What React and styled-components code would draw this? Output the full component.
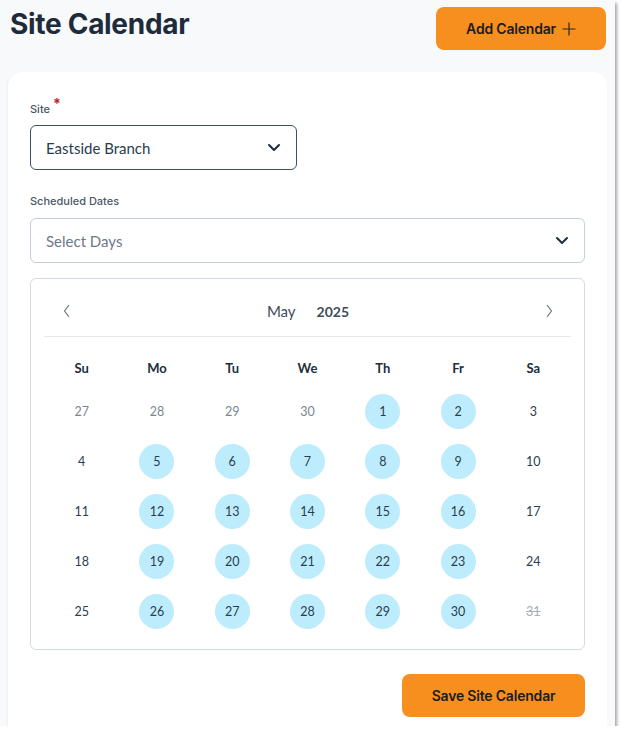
import React from "react";
import styled, { createGlobalStyle } from "styled-components";

const GlobalStyle = createGlobalStyle`
  html, body {
    margin: 0;
    padding: 0;
    background: #ffffff;
  }
  * {
    box-sizing: border-box;
  }
`;

const Frame = styled.div`
  width: 615px;
  height: 726px;
  background: #f7f9fb;
  box-shadow: 2px 3px 3px rgba(0, 0, 0, 0.35);
  overflow: hidden;
  font-family: "Lato", "Noto Sans", sans-serif;
`;

const Header = styled.header`
  display: flex;
  justify-content: space-between;
  align-items: flex-start;
  height: 72px;
  padding: 7px 9px 0 10px;
`;

const Title = styled.h1`
  margin: 0;
  margin-top: -3px;
  font-family: "Inter", sans-serif;
  font-size: 28px;
  font-weight: 700;
  letter-spacing: -0.3px;
  color: #1d2b3a;
  line-height: 40px;
`;

const OrangeButton = styled.button`
  display: flex;
  align-items: center;
  justify-content: center;
  gap: 6px;
  width: ${({ w }) => w}px;
  height: 43px;
  border: none;
  border-radius: 8px;
  background: #f78f1e;
  color: #1c1c1c;
  font-family: "Inter", sans-serif;
  font-size: 14px;
  font-weight: 600;
  letter-spacing: -0.2px;
  cursor: pointer;
  padding: 0;
`;

const Card = styled.main`
  margin-left: 8px;
  width: 599px;
  height: 660px;
  background: #ffffff;
  border-radius: 14px 14px 0 0;
  box-shadow: -1px 0 2px rgba(0, 0, 0, 0.04);
  padding: 29px 22px 0 22px;
  display: flex;
  flex-direction: column;
`;

const Label = styled.label`
  display: block;
  height: 14px;
  font-family: "Inter", sans-serif;
  font-size: 11px;
  font-weight: 500;
  color: #4c5868;
  line-height: 14px;
  margin-top: ${({ mt }) => mt || 0}px;
  margin-bottom: 10px;
`;

const Required = styled.span`
  color: #c0272d;
  font-size: 14px;
  font-weight: 700;
  margin-left: 3px;
  position: relative;
  top: -4px;
`;

const Select = styled.div`
  display: flex;
  align-items: center;
  justify-content: space-between;
  width: ${({ w }) => (w ? `${w}px` : "100%")};
  height: 45px;
  border: 1px solid ${({ active }) => (active ? "#3e5064" : "#c3cfdb")};
  border-radius: 6px;
  padding: 0 15px 0 15px;
  font-size: 15px;
  color: ${({ active }) => (active ? "#2b3b4e" : "#6d7987")};
`;

const Chevron = () => (
  <svg width="14" height="9" viewBox="0 0 14 9" fill="none">
    <path d="M2 2l5 5 5-5" stroke="#1e2d3f" strokeWidth="2" strokeLinecap="round" strokeLinejoin="round" />
  </svg>
);

const Plus = () => (
  <svg width="14" height="14" viewBox="0 0 14 14" fill="none">
    <path d="M7 0.5v13M0.5 7h13" stroke="#2a2a2a" strokeWidth="1.2" />
  </svg>
);

const Calendar = styled.section`
  margin-top: 15px;
  height: 372px;
  border: 1px solid #d3dbe3;
  border-radius: 6px;
  padding: 0 13px;
`;

const CalHead = styled.div`
  display: flex;
  align-items: center;
  justify-content: space-between;
  height: 58px;
  padding: 6px 16px 0 17px;
  border-bottom: 1px solid #e5e9ee;
`;

const NavArrow = styled.span`
  display: flex;
  width: 10px;
  justify-content: center;
`;

const MonthYear = styled.div`
  display: flex;
  gap: 21px;
  align-items: baseline;
  color: #3f4c5c;
`;

const Month = styled.span`
  font-size: 15px;
`;

const Year = styled.span`
  font-size: 14px;
  font-weight: 700;
`;

const Grid = styled.div`
  display: grid;
  grid-template-columns: repeat(7, 1fr);
  grid-template-rows: 36px repeat(5, 50px);
  margin-top: 13px;
`;

const WeekDay = styled.div`
  display: flex;
  align-items: center;
  justify-content: center;
  font-size: 13px;
  font-weight: 700;
  color: #202e3e;
`;

const Cell = styled.div`
  display: flex;
  align-items: center;
  justify-content: center;
`;

const Day = styled.span`
  display: flex;
  align-items: center;
  justify-content: center;
  width: 35px;
  height: 35px;
  border-radius: 50%;
  font-size: 12.5px;
  background: ${({ selected }) => (selected ? "#bdecfd" : "transparent")};
  color: ${({ muted, disabled }) => (disabled ? "#a6afb9" : muted ? "#7b8692" : "#2c3c4f")};
  text-decoration: ${({ disabled }) => (disabled ? "line-through" : "none")};
`;

const Footer = styled.div`
  display: flex;
  justify-content: flex-end;
  margin-top: 24px;
`;

const weekDays = ["Su", "Mo", "Tu", "We", "Th", "Fr", "Sa"];

const buildDays = () => {
  const cells = [27, 28, 29, 30].map((d) => ({ d, muted: true }));
  for (let d = 1; d <= 31; d++) {
    const col = (d + 3) % 7;
    cells.push({
      d,
      selected: d !== 31 && col !== 0 && col !== 6,
      disabled: d === 31,
    });
  }
  return cells;
};

const Left = () => (
  <svg width="7" height="14" viewBox="0 0 7 14" fill="none">
    <path d="M6 1L1.5 7 6 13" stroke="#6b7785" strokeWidth="1.2" />
  </svg>
);

const Right = () => (
  <svg width="7" height="14" viewBox="0 0 7 14" fill="none">
    <path d="M1 1l4.5 6L1 13" stroke="#6b7785" strokeWidth="1.2" />
  </svg>
);

export default function App() {
  const days = buildDays();
  return (
    <>
      <GlobalStyle />
      <Frame>
        <Header>
          <Title>Site Calendar</Title>
          <OrangeButton w={170}>
            Add Calendar <Plus />
          </OrangeButton>
        </Header>
        <Card>
          <Label>
            Site<Required>*</Required>
          </Label>
          <Select active w={267}>
            Eastside Branch
            <Chevron />
          </Select>
          <Label mt={24}>Scheduled Dates</Label>
          <Select>
            Select Days
            <Chevron />
          </Select>
          <Calendar>
            <CalHead>
              <NavArrow>
                <Left />
              </NavArrow>
              <MonthYear>
                <Month>May</Month>
                <Year>2025</Year>
              </MonthYear>
              <NavArrow>
                <Right />
              </NavArrow>
            </CalHead>
            <Grid>
              {weekDays.map((w) => (
                <WeekDay key={w}>{w}</WeekDay>
              ))}
              {days.map((c, i) => (
                <Cell key={i}>
                  <Day selected={c.selected} muted={c.muted} disabled={c.disabled}>
                    {c.d}
                  </Day>
                </Cell>
              ))}
            </Grid>
          </Calendar>
          <Footer>
            <OrangeButton w={183}>Save Site Calendar</OrangeButton>
          </Footer>
        </Card>
      </Frame>
    </>
  );
}
